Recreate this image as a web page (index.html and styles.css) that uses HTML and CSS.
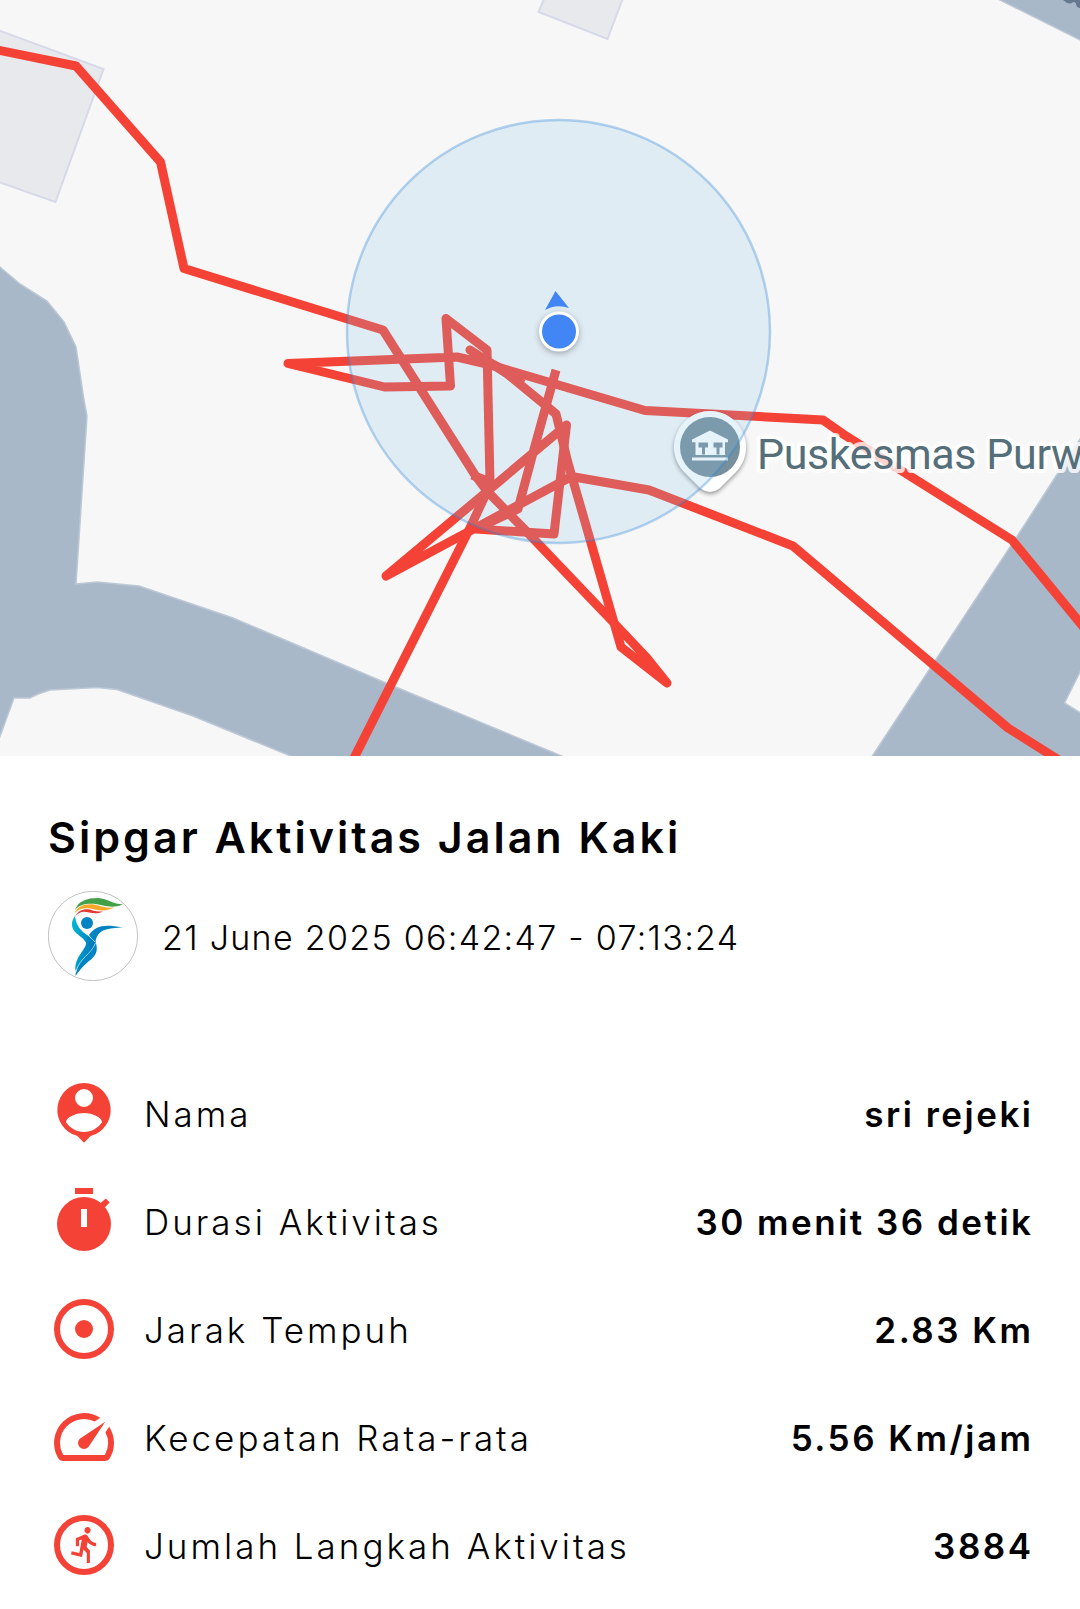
FILE: index.html
```html
<!DOCTYPE html>
<html lang="id">
<head>
  <meta charset="UTF-8" />
  <meta name="viewport" content="width=device-width, initial-scale=1.0"/>
  <title>Sipgar Aktivitas Jalan Kaki</title>
  <link rel="stylesheet" href="styles.css">
</head>
<body>
  <!-- Map -->
  <svg class="map" viewBox="0 0 1080 756" role="img" aria-label="Peta rute">
    <g class="building">
      <path d="M-10 27L103.500 69L55.500 202L-10 179z" />
      <path d="M548 -10L538.500 12L607.500 39L626 -10z" />
    </g>
    <g class="road">
      <path d="M-5 263L0 267L20 284L47 301L64 322L76 347L84 400L87 416L76 584L97 582L139 586L233 618L386 683L564 757L293 757L193 716L117 689.500L97 687.500L50 690L38 694L30 698L14 698L-5 750z" />
      <path d="M992 -4L1084 42L1084 -4z" />
      <path d="M871 758L1018 535L1058 473L1084 433L1084 664L1064.500 703L1084 715L1084 758z" />
    </g>
    <path class="trees" d="M1063 0q4 4 8 3.500q3 -3 5 0q0 4 5 5v-9z" />

    <!-- Walking route -->
    <g class="route">
      <path d="M-5 49.500L76 66L160.500 162L184 268.500L383 330L475 475L487 491L527 532L614 623L647 658L667 683L621 647L568 463L556 414L544 404L500 368L487 361L470 350L523 384" />
      <path d="M470 353L487 362" />
      <path d="M472 475L490 482L487 350L446 318.500L450.500 386L384.500 387L288 363.500L457 357L487 364L645 410.500L823 420L843 434L1012 540L1085 629" />
      <path d="M556 370L533 453L518 509L476 529L554 534L566.500 425L386 576L571.500 476.500L649 490L793 546L1008 728L1062 762" />
      <path d="M490 485L470 528L352 762" />
    </g>

    <!-- Place pin -->
    <path class="pin" d="M710 411a36 36 0 0 1 26 61l-16.500 16.500q-9.500 7 -19 0l-16.500 -16.500a36 36 0 0 1 26 -61z" />
    <circle class="pin-disc" cx="710" cy="447" r="30" />
    <path class="pin-glyph" fill-rule="evenodd" d="M692 439.500L710 430.500L728 439.500V442.300H725V455H695.500V442.300H692zM698.500 442.500v5h3.500v7h3v-7h3v-5zM713.500 442.500v5h3v7h3v-7h3v-5zM692 457.500h36v3h-36z" />

    <!-- Current position -->
    <circle class="accuracy" cx="558.500" cy="331.500" r="211.500" />
    <path class="heading" d="M555.500 291L569 308Q556 303.500 545 310z" />
    <circle class="dot" cx="559" cy="331.500" r="18.500" />

    <text class="place" x="757" y="469">Puskesmas Purw</text>
  </svg>

  <!-- Activity details -->
  <main class="detail">
    <h1>Sipgar Aktivitas Jalan Kaki</h1>

    <div class="summary">
      <svg class="avatar" viewBox="0 0 90 90">
        <defs>
          <linearGradient id="teal" x1="0" y1="0" x2="1" y2="0.3">
            <stop offset="0" stop-color="#00bcd4" />
            <stop offset="1" stop-color="#0277bd" />
          </linearGradient>
        </defs>
        <circle cx="45" cy="45" r="44.700" fill="#fff" stroke="#999" stroke-width="0.600" />
        <path fill="#43a047" d="M27 19C30 10 39 7 50 7C60 8 65 13 75 13.500C67 16.500 62 16 55 14.500C44 11.500 32 12 27 19z" />
        <path fill="#f9a825" d="M26.500 23C29 15 37 12.500 46 13.500C54 16 59 17 66 16.500C59 20 54 20 47 18.500C39 16.500 31 16 26.500 23z" />
        <path fill="#e53935" d="M27 26C30 19 36 17.500 42 18.500C47 20.500 50 20.500 55 20.500C50 23 46 22.500 41 21.500C35 20 31 20.500 27 26z" />
        <circle cx="39" cy="32" r="6" fill="#0284c4" />
        <path fill="#0284c4" d="M41 44C48 34 56 33 75 36.500C61 37 49 38 47.500 51C51 60 47 66 41 70C35 75 31 80 27.500 85C28 71 42 62 47 52z" />
        <path fill="url(#teal)" d="M27 25C24 29 22 35 27 41C31 45 37 48 38 52C38 59 26 66 27.500 80C33 69 45 63 47.500 51C41 43 29 42 27 25z" />
        <path fill="none" stroke="#fff" stroke-width="0.600" d="M47.500 52C43 64 31 67 28 81M40 44L47 51" />
      </svg>
      <span class="time">21 June 2025 06:42:47 - 07:13:24</span>
    </div>

    <ul class="stats">
      <li>
        <svg class="icon" viewBox="0 0 24 24">
          <path fill-rule="evenodd" d="M12 2a9 9 0 0 0-2.200 17.700L12 21.900l2.200-2.200A9 9 0 0 0 12 2zM12 4a3 3 0 1 1 0 6a3 3 0 0 1 0-6zM12 18.300c-2.500 0-4.710-1.280-6-3.220c.03-1.990 4-3.080 6-3.080c1.990 0 5.970 1.090 6 3.080c-1.290 1.940-3.500 3.220-6 3.220z" />
        </svg>
        <span class="label">Nama</span>
        <span class="value">sri rejeki</span>
      </li>
      <li>
        <svg class="icon" viewBox="0 0 24 24">
          <path fill-rule="evenodd" d="M9 1h6v2H9zM12 4a9 9 0 1 0 0 18a9 9 0 0 0 0-18zM11 8h2v6h-2z" />
          <path d="M17.300 6.200l2-1.700l1.250 1.350l-1.800 1.800z" />
        </svg>
        <span class="label">Durasi Aktivitas</span>
        <span class="value">30 menit 36 detik</span>
      </li>
      <li>
        <svg class="icon" viewBox="0 0 24 24">
          <circle class="ring" cx="12" cy="12" r="9" />
          <circle cx="12" cy="12" r="3" />
        </svg>
        <span class="label">Jarak Tempuh</span>
        <span class="value">2.83 Km</span>
      </li>
      <li>
        <svg class="icon" viewBox="0 0 24 24">
          <path d="M20.380 8.570l-1.230 1.850a8 8 0 0 1-.22 7.580H5.070A8 8 0 0 1 15.580 6.850l1.850-1.230A10 10 0 0 0 3.350 19a2 2 0 0 0 1.720 1h13.850a2 2 0 0 0 1.740-1a10 10 0 0 0-.27-10.440z" />
          <path d="M10.590 15.410a2 2 0 0 0 2.830 0l5.660-8.490l-8.490 5.660a2 2 0 0 0 0 2.830z" />
        </svg>
        <span class="label">Kecepatan Rata-rata</span>
        <span class="value">5.56 Km/jam</span>
      </li>
      <li>
        <svg class="icon" viewBox="0 0 24 24">
          <circle class="ring" cx="12" cy="12" r="9" />
          <path transform="translate(6.170 5.170) scale(0.520 0.558)" d="M13.490 5.480c1.100 0 2-.9 2-2s-.9-2-2-2s-2 .9-2 2s.9 2 2 2zm-3.600 13.900l1-4.400l2.100 2v6h2v-7.500l-2.100-2l.6-3c1.300 1.500 3.300 2.500 5.500 2.500v-2c-1.900 0-3.500-1-4.300-2.400l-1-1.600c-.4-.6-1-1-1.700-1c-.3 0-.5.1-.8.1l-5.200 2.200v4.700h2v-3.400l1.800-.7l-1.600 8.100l-4.900-1l-.4 2l7 1.400z" />
        </svg>
        <span class="label">Jumlah Langkah Aktivitas</span>
        <span class="value">3884</span>
      </li>
    </ul>
  </main>
</body>
</html>
```
FILE: styles.css
```css
/* General Styles */
body {
  margin: 0;
  background-color: #fff;
  color: #000;
  font-family: 'Inter', 'Open Sans', sans-serif;
}

/* Map */
.map {
  display: block;
  width: 100%;
  height: 756px;
  background-color: #f7f7f7;
}

.building {
  fill: #e8e9ed;
  stroke: #d7d9e8;
  stroke-width: 2;
}

.road {
  fill: #a9b8c9;
  stroke: #bcc8d5;
  stroke-width: 1.5;
}

.trees {
  fill: #66788f;
}

.route {
  fill: none;
  stroke: #f44336;
  stroke-width: 9;
  stroke-linejoin: round;
}

.pin {
  fill: #fff;
  filter: drop-shadow(0 2px 2px rgba(0, 0, 0, 0.4));
}

.pin-disc {
  fill: #78909c;
}

.pin-glyph {
  fill: #fff;
}

.accuracy {
  fill: rgba(137, 197, 237, 0.2);
  stroke: rgba(40, 130, 215, 0.33);
  stroke-width: 2.5;
}

.heading {
  fill: #4286f5;
}

.dot {
  fill: #4286f5;
  stroke: #fff;
  stroke-width: 3;
  filter: drop-shadow(0 2px 3px rgba(0, 0, 0, 0.3));
}

.place {
  font-family: 'Roboto', sans-serif;
  font-size: 43px;
  letter-spacing: -0.4px;
  fill: #546e7a;
  stroke: rgba(255, 255, 255, 0.8);
  stroke-width: 8;
  stroke-linejoin: round;
  paint-order: stroke;
}

/* Details */
.detail {
  padding: 54px 48px 28px;
}

h1 {
  margin: 0;
  font-size: 43px;
  font-weight: 600;
  line-height: 54px;
  letter-spacing: 3px;
}

.summary {
  display: flex;
  align-items: center;
  gap: 24px;
  margin-top: 27px;
}

.avatar {
  width: 90px;
  height: 90px;
}

.time {
  padding-top: 2px;
  font-size: 34px;
  font-weight: 300;
  letter-spacing: 1.3px;
}

/* Stats */
.stats {
  display: grid;
  gap: 36px;
  margin: 96px 0 0;
  padding: 0;
  list-style: none;
}

.stats li {
  display: flex;
  align-items: center;
  height: 72px;
}

.icon {
  width: 72px;
  height: 72px;
  margin-right: 24px;
  fill: #f44336;
}

.ring {
  fill: none;
  stroke: #f44336;
  stroke-width: 2;
}

.label,
.value {
  padding-top: 2px;
  font-size: 35px;
}

.label {
  flex: 1;
  font-weight: 300;
  letter-spacing: 3px;
}

.value {
  margin-right: -1.5px;
  font-weight: 600;
  letter-spacing: 2.5px;
}
```
